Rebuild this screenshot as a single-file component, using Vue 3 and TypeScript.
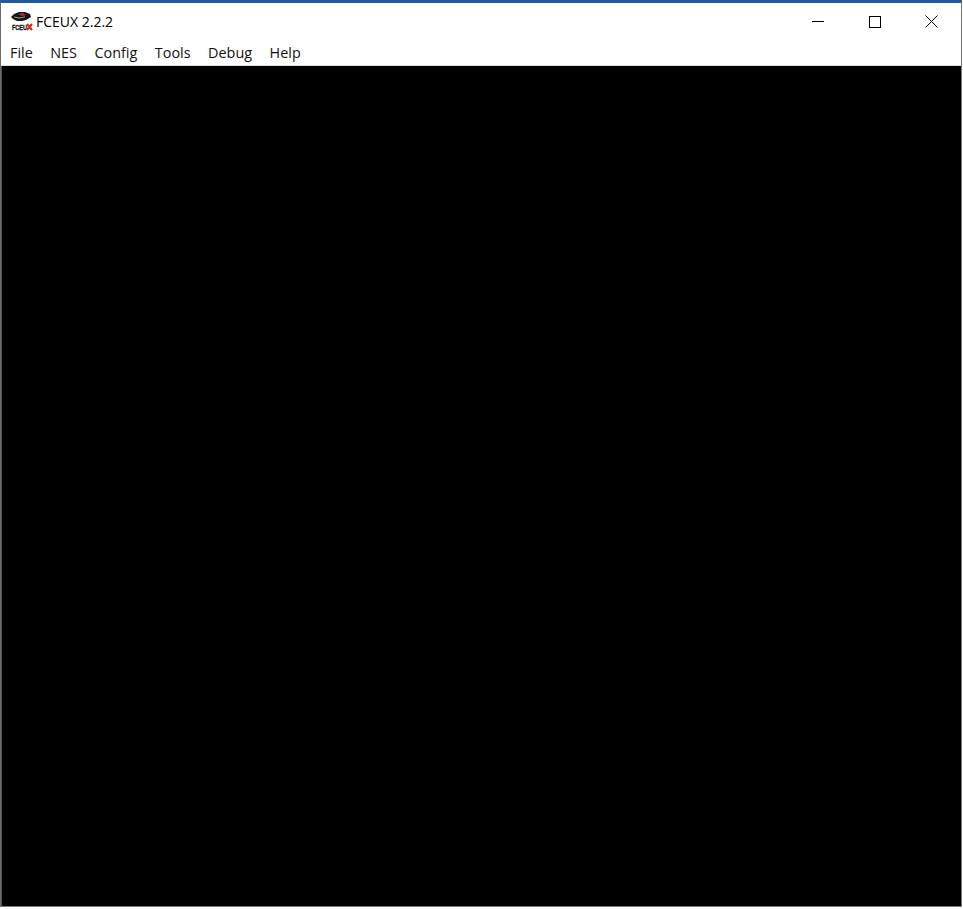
<script setup lang="ts">
const menus: string[] = ['File', 'NES', 'Config', 'Tools', 'Debug', 'Help']
</script>

<template>
  <div class="window">
    <header class="titlebar">
      <div class="title-left">
        <svg class="app-icon" width="22" height="22" viewBox="0 0 22 22">
          <path d="M0 6 L3 3 L8 1 L14 1 L19 3 L20 6 L15 9 L11 10 L6 10 L2 8 Z" fill="#141414" />
          <path d="M7 3 L12 2 L15 4 L11 5 Z" fill="#a83232" />
          <path d="M3 6 L8 7 L14 6" stroke="#9a9a9a" stroke-width="1" fill="none" />
          <text x="1" y="19" class="icon-text" textLength="15" lengthAdjust="spacingAndGlyphs">FCEU</text>
          <path d="M16 13 L21 19 M21 13 L16 19" stroke="#d02a1e" stroke-width="2" />
        </svg>
        <span class="title">FCEUX 2.2.2</span>
      </div>
      <div class="controls">
        <div class="control">
          <svg width="12" height="12" viewBox="0 0 12 12"><path d="M0 5.5 H12" stroke="#000" stroke-width="1" /></svg>
        </div>
        <div class="control">
          <svg width="12" height="12" viewBox="0 0 12 12"><rect x="0.5" y="0.5" width="11" height="11" fill="none" stroke="#000" stroke-width="1" /></svg>
        </div>
        <div class="control">
          <svg width="13" height="13" viewBox="0 0 13 13"><path d="M0.5 0.5 L12.5 12.5 M12.5 0.5 L0.5 12.5" stroke="#000" stroke-width="1" /></svg>
        </div>
      </div>
    </header>
    <nav class="menubar">
      <span v-for="m in menus" :key="m" class="menu-item">{{ m }}</span>
    </nav>
    <main class="viewport"></main>
  </div>
</template>

<style>
html, body { margin: 0; background: #fff; overflow: hidden; }
</style>

<style scoped>
.window {
  box-sizing: border-box;
  width: 962px;
  height: 907px;
  display: flex;
  flex-direction: column;
  background: #fff;
  border-top: 3px solid #1f5a9a;
  border-left: 1px solid #6b6b6b;
  border-right: 1px solid #7a7a7a;
  border-bottom: 1px solid #7a7a7a;
  font-family: "Open Sans", "Noto Sans", sans-serif;
  color: #000;
}
.titlebar {
  height: 37px;
  display: flex;
  align-items: center;
  justify-content: space-between;
  flex: none;
}
.title-left {
  display: flex;
  align-items: center;
  gap: 3px;
  padding-left: 10px;
}
.app-icon { display: block; }
.icon-text {
  font-family: "Liberation Sans", sans-serif;
  font-size: 8px;
  font-weight: 700;
  fill: #111;
  stroke: #111;
  stroke-width: 0.3px;
}
.title { font-size: 14px; line-height: 20px; }
.controls { display: flex; margin-right: 1px; }
.control {
  width: 57px;
  height: 36px;
  display: flex;
  align-items: center;
  justify-content: center;
}
.menubar {
  height: 26px;
  flex: none;
  display: flex;
  align-items: center;
  gap: 17.5px;
  padding-left: 9px;
  padding-bottom: 1px;
  box-sizing: border-box;
  font-size: 14.4px;
  color: #111;
  border-bottom: 1px solid #e0e0e0;
}
.viewport {
  flex: 1;
  background: #000;
  border-left: 1px solid #555;
}
</style>
